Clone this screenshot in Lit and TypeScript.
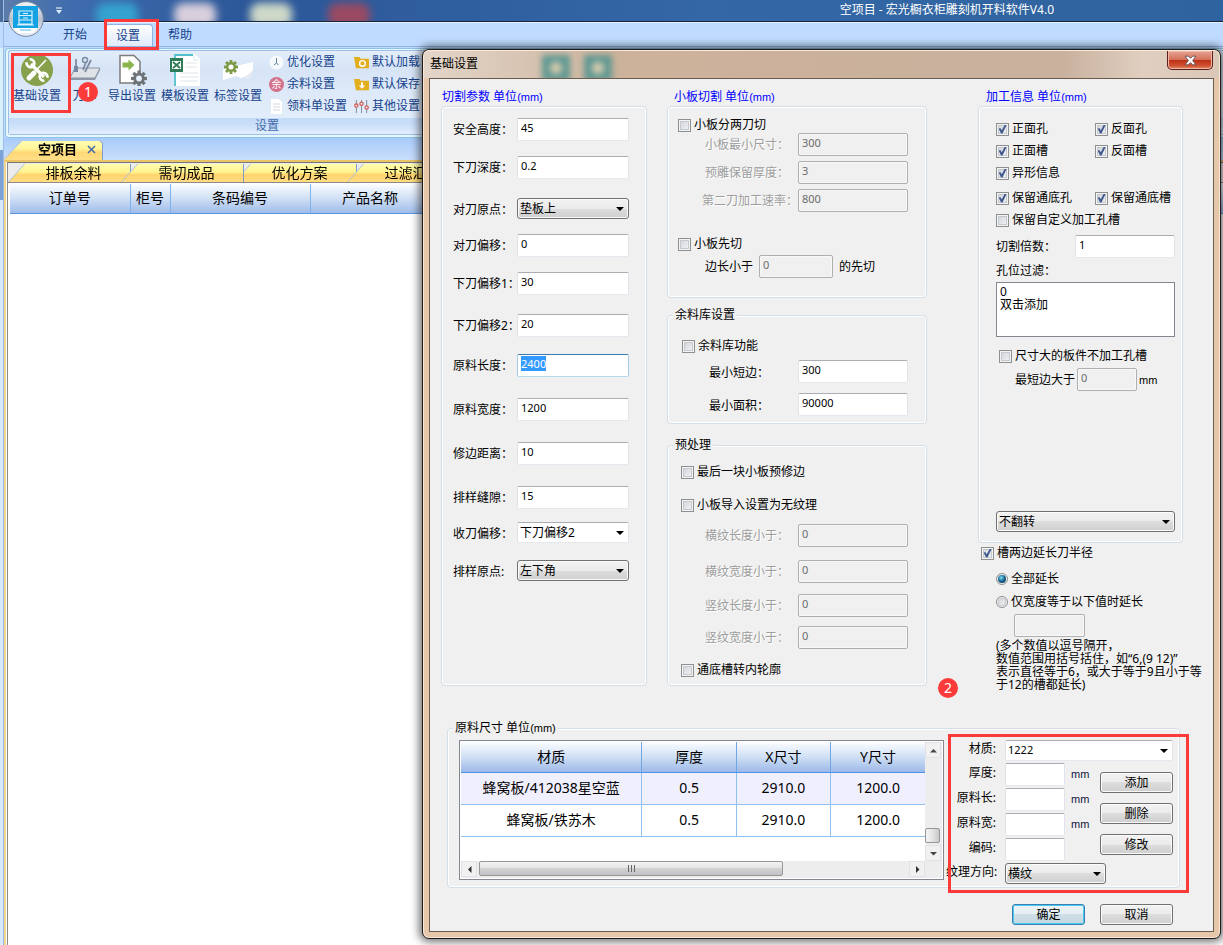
import { LitElement, html, css, svg, nothing } from "lit";
import { customElement, query } from "lit/decorators.js";
import { classMap } from "lit/directives/class-map.js";

type Row = { id: string; label: string; value: string; kind?: "combo" | "list" };

const CUT_ROWS: Row[] = [
  { id: "safe", label: "安全高度：", value: "45" },
  { id: "depth", label: "下刀深度：", value: "0.2" },
  { id: "origin", label: "对刀原点：", value: "垫板上", kind: "list" },
  { id: "offset", label: "对刀偏移：", value: "0" },
  { id: "offset1", label: "下刀偏移1：", value: "30" },
  { id: "offset2", label: "下刀偏移2：", value: "20" },
  { id: "length", label: "原料长度：", value: "2400" },
  { id: "width", label: "原料宽度：", value: "1200" },
  { id: "trim", label: "修边距离：", value: "10" },
  { id: "gap", label: "排样缝隙：", value: "15" },
  { id: "retract", label: "收刀偏移：", value: "下刀偏移2", kind: "combo" },
  { id: "nest", label: "排样原点:", value: "左下角", kind: "list" },
];

const MATERIALS = [
  ["蜂窝板/412038星空蓝", "0.5", "2910.0", "1200.0"],
  ["蜂窝板/铁苏木", "0.5", "2910.0", "1200.0"],
];

const gear = (cx: number, cy: number, r: number, fill: string, hole: string) => svg`
  <g transform="translate(${cx} ${cy})" fill=${fill}>
    <circle r=${r * 0.72}></circle>
    ${[0, 45, 90, 135].map(
      (a) => svg`<rect x=${-r * 0.2} y=${-r} width=${r * 0.4} height=${r * 2} transform="rotate(${a})"></rect>`
    )}
    <circle r=${r * 0.36} fill=${hole}></circle>
  </g>`;

const ICONS = {
  basic: svg`<svg class="big" viewBox="0 0 32 32">
    <circle cx="16" cy="16" r="16" fill="#86a04b"></circle>
    <g stroke="#fff" fill="none">
      <path d="M10 10 23 23" stroke-width="3.200"></path>
      <path d="M5.600 8.200a4.400 4.400 0 0 0 6.200 4.600M8.600 5.200a4.400 4.400 0 0 1 4.400 6.200" stroke-width="2.600"></path>
      <path d="M26.400 23.800a4.400 4.400 0 0 0-6.200-4.600M23.400 26.800a4.400 4.400 0 0 1-4.400-6.200" stroke-width="2.600"></path>
      <path d="M25 6 15 16.500" stroke-width="1.600"></path>
      <path d="M13 19 8 24" stroke-width="5" stroke-linecap="round"></path>
    </g></svg>`,
  tools: svg`<svg class="big" viewBox="0 0 32 32">
    <path d="M6 14h25l-5 10H1z" fill="#dfe3e8" stroke="#8793a5"></path>
    <path d="M1 24h25l5-10v2l-5 10H1z" fill="#8b95a3"></path>
    <path d="M7 5v9M17 8l-3 8M22 6l-6 12" stroke="#7d8ca3" stroke-width="1.800" fill="none"></path>
    <path d="M5 12h4v6H5z" fill="#7488a5"></path>
    <circle cx="16" cy="6" r="2.500" fill="none" stroke="#7d8ca3" stroke-width="1.500"></circle></svg>`,
  exporting: svg`<svg class="big" viewBox="0 0 32 32">
    <path d="M4 1.500h14l6 6V29H4z" fill="#fff" stroke="#7c7c7c" stroke-width="1.500"></path>
    <path d="M6.500 8.500h6V5.500l6 5.500-6 5.500v-3h-6z" fill="#8bb54c"></path>
    ${gear(23, 24.5, 8, "#6f7378", "#e6eefa")}</svg>`,
  template: svg`<svg class="big" viewBox="0 0 32 32">
    <path d="M5 0h21l5 5v27H5z" fill="#fff"></path>
    <path d="M6 32V1h18" fill="none" stroke="#52c0c9" stroke-width="1.800"></path>
    <path d="M25 1v5h5" fill="none" stroke="#d3eff2"></path>
    <path d="M16 9h12M16 13h12M11 19h18M11 23h18M11 27h18" stroke="#dfe5ea"></path>
    <path d="M1 4h13v14H1z" fill="#2f7a57"></path>
    <path d="M3 7h9v8H3z" fill="#fff"></path>
    <path d="M4 8l7 6M11 8l-7 6" stroke="#2f7a57" stroke-width="1.800"></path></svg>`,
  tag: svg`<svg class="big" viewBox="0 0 32 32">
    <path d="M1 15 31 8v8q-5 6-12 8l-5-2-13 4z" fill="#fff"></path>
    <path d="M21 24q6-2 10-8-1 7-5 9z" fill="#e7eaee"></path>
    ${gear(9, 13, 7, "#7d9a45", "#fff")}</svg>`,
  clock: svg`<svg class="small" viewBox="0 0 15 15"><circle cx="7.500" cy="7.500" r="7" fill="#f6f9fc"></circle>
    <path d="M7.500 3v5L5 10M7.500 8l2 2" stroke="#68829e" fill="none"></path></svg>`,
  rest: html`<span class="rest">余</span>`,
  list: svg`<svg class="small" viewBox="0 0 15 15"><path d="M2 0h8l3 3v12H2z" fill="#fff"></path>
    <path d="M4 5h7M4 8h7M4 11h7" stroke="#d2d6dc"></path></svg>`,
  load: svg`<svg class="small" viewBox="0 0 16 14"><path d="M0 1h6l1 2h9v10H2z" fill="#e2ae1b"></path>
    <circle cx="9" cy="8" r="3" fill="none" stroke="#fff" stroke-width="1.500"></circle></svg>`,
  save: svg`<svg class="small" viewBox="0 0 16 14"><path d="M0 1h6l1 2h9v10H2z" fill="#e2ae1b"></path>
    <path d="M7.500 4.500h2V8H12l-3.500 3.500L5 8h2.500z" fill="#fff"></path></svg>`,
  other: svg`<svg class="small" viewBox="0 0 16 14"><path d="M2.500 0v14M8 0v14M13.500 0v14" stroke="#7d8794"></path>
    <g fill="#fff" stroke="#d25a55" stroke-width="1.400"><circle cx="2.500" cy="6" r="1.700"></circle>
    <circle cx="8" cy="4" r="1.700"></circle><circle cx="13.500" cy="8" r="1.700"></circle></g></svg>`,
};

const base = css`
  * { box-sizing: border-box; }
  h1, h2, p { margin: 0; font-weight: normal; font-size: inherit; }
  button, input, select, textarea { font: inherit; color: inherit; margin: 0; border-radius: 0; }
  .mark { position: absolute; border: 3px solid #fb3a3a; pointer-events: none; z-index: 3; }
  .dot {
    position: absolute; z-index: 4; width: 20px; height: 20px; border-radius: 50%;
    background: #fb3a3a; color: #fff; font-size: 14px; line-height: 20px; text-align: center;
  }
`;

const mm = (text: string) => html`<span class="mm">${text}</span>`;

@customElement("settings-dialog")
export class SettingsDialog extends LitElement {
  static styles = [
    base,
    css`
      :host {
        display: flex; flex-direction: column; color: #000; background: #e6c7aa;
        border: 1px solid #1f1a17; border-radius: 7px; padding: 0 6px 6px;
        box-shadow: inset 0 0 0 1px #f7e8da, 0 0 8px 3px rgba(0, 0, 0, 0.55);
        font: 12px/16px "Noto Sans", "Noto Sans CJK SC", sans-serif;
      }
      .caption {
        position: relative; display: flex; align-items: flex-start; justify-content: space-between;
        height: 28px; margin: 0 -5px; padding: 0 6px; overflow: hidden; border-radius: 6px 6px 0 0;
        border-top: 1px solid #f6ebe1;
        background: linear-gradient(90deg, #e3d5c8 0, #d9c6b5 90px, #cdb29b 190px, #c9b19e 640px, #e0cfc0 720px, #d9c8b8);
      }
      .caption h1 { position: relative; line-height: 26px; }
      .ghost { position: absolute; top: 4px; width: 28px; height: 26px; background: #5d9791; filter: blur(3px); }
      .ghost.a { left: 118px; }
      .ghost.b { left: 160px; }
      .ghost::after { content: ""; position: absolute; inset: 7px 8px; background: #d6cbae; border-radius: 5px; }
      .close {
        position: relative; width: 46px; height: 19px; padding: 0; border: 1px solid #5b2019; border-top: 0;
        border-radius: 0 0 5px 5px; box-shadow: inset 0 0 0 1px #f0b7a8;
        background: linear-gradient(#e6a593, #d4705a 48%, #bb2f14 50%, #cf4f2f 80%, #e28a62);
      }
      .close svg { display: block; margin: auto; width: 13px; height: 11px; }
      .client { border: 1px solid #6b5c50; background: #f0f0f0; padding-top: 9px; }
      .mm { font-family: "Liberation Sans", sans-serif; font-size: 11px; }

      .columns { position: relative; display: grid; grid-template-columns: 206fr 260fr 256fr; gap: 20px; margin: 0 10px 0 11px; }
      .col { display: flex; flex-direction: column; min-width: 0; }
      .col.left { padding-bottom: 5px; }
      .col.right { position: relative; padding-left: 31px; }
      .title { color: #00f; line-height: 18px; padding-left: 1px; }
      .col.mid .title { padding-left: 7px; }
      .col.right .title { padding-left: 8px; }

      fieldset { min-width: 0; margin: 0; padding: 0; border: 1px solid #d3dee7; border-radius: 4px; box-shadow: inset 0 0 0 1px #fff; }
      legend { margin-left: 5px; padding: 0 2px; line-height: 16px; background: #f0f0f0; }

      input.text, .combo select, textarea {
        width: 100%; min-width: 0; height: 23px; padding: 0 3px 4px; background: #fff; outline: 0;
        border: 1px solid #e2e3ea; border-top-color: #abadb3; border-bottom-color: #e3e9ef; border-radius: 2px;
      }
      input.text { font-size: 11px; }
      input.text:disabled { background: #f0f0f0; color: #6d6d6d; border-color: #afafaf; box-shadow: inset 0 0 0 1px #f8f8f8; }
      input.text:focus { border-color: #a4c9e3; border-top-color: #3d7bad; border-bottom-color: #b7d9ed; }
      input::selection { background: #39f; color: #fff; }

      .combo { position: relative; display: block; min-width: 0; }
      .combo select { appearance: none; display: block; height: 21px; padding: 0 18px 0 2px; }
      .combo::after {
        content: ""; position: absolute; right: 5px; top: 9px;
        border: 4px solid transparent; border-top-color: #000; border-bottom: 0; pointer-events: none;
      }
      .combo.list select, .btn {
        border: 1px solid #707070; border-radius: 3px; box-shadow: inset 0 0 0 1px #fbfbfb;
        background: linear-gradient(#f2f2f2, #ebebeb 50%, #ddd 50%, #cfcfcf);
      }
      .btn { width: 73px; height: 21px; padding: 0; line-height: 16px; }
      .btn.default { border-color: #3c7fb1; box-shadow: inset 0 0 0 1px #46c9f2; background: linear-gradient(#eef4f7, #e3eef4 50%, #cfdfe8 50%, #c5d7e2); }

      label { white-space: nowrap; }
      .check { display: flex; align-items: center; gap: 3px; height: 16px; }
      .check input { appearance: none; position: relative; flex: none; width: 13px; height: 13px; border: 1px solid #8e8f8f; background: linear-gradient(135deg, #cdd1d8, #f6f6f6); box-shadow: inset 0 0 0 1px #f4f4f4, inset 0 0 0 2px #c4c9d0; }
      .check input:checked::after { content: ""; position: absolute; inset: 1px; background: #42598f; clip-path: polygon(8% 48%, 26% 40%, 42% 64%, 76% 0, 98% 0, 50% 100%, 34% 100%); }
      .check input[type="radio"] { border-radius: 50%; width: 12px; height: 12px; }
      .check input[type="radio"]:checked::after { inset: 1px; border-radius: 50%; clip-path: none; background: radial-gradient(circle at 40% 35%, #7fe0f5, #14608d 50%, #0c3350); }

      .cut { flex: 1; display: grid; align-content: start; align-items: start; padding: 11px 17px 0 10px;
        grid-template-columns: 65px minmax(0, 1fr);
        grid-template-rows: 38px 42px 36px 38px 42px 40px 44px 44px 44px 36px 38px 24px; }
      .cut label { line-height: 24px; padding-left: 1px; }

      .pairs { display: grid; grid-template-columns: 96px minmax(0, 1fr); row-gap: 5px; padding: 0 18px 0 34px; }
      .pairs label { line-height: 23px; padding-left: 3px; }
      .pairs label.long { padding-left: 0; }
      .off label { color: #9d9d9d; text-shadow: 1px 1px 0 #fff; }
      .small { padding: 10px 0 19px; }
      .small .check { margin-left: 10px; }
      .small .pairs + .check { margin-top: 24px; }
      .inline { display: flex; align-items: center; gap: 6px; margin: 3px 0 0 37px; }
      .inline input { flex: 0 0 74px; }
      .stock { margin-top: 9px; }
      .stock .check { margin: 15px 0 6px 14px; }
      .stock .pairs { row-gap: 10px; padding-bottom: 7px; }
      .stock .pairs label { padding-left: 7px; line-height: 26px; height: 23px; }
      .pre { margin-top: 13px; padding-bottom: 7px; }
      .pre .check { margin: 11px 0 0 13px; }
      .pre .check + .check { margin-top: 17px; }
      .pre .pairs { grid-template-rows: 36px 34px 32px 23px; row-gap: 0; align-items: start; margin-top: 11px; }
      .pre .pairs + .check { margin-top: 13px; }

      .info { margin-right: 20px; padding: 14px 7px 10px 17px; }
      .grid2 { display: grid; grid-template-columns: 99px 1fr; row-gap: 6px; }
      .grid2 .wide { grid-column: 1 / -1; }
      .grid2 .later { margin-top: 3px; }
      .times { display: grid; grid-template-columns: 79px minmax(0, 1fr); align-items: center; margin-top: 7px; }
      .filter { display: block; height: 24px; line-height: 26px; }
      textarea { display: block; height: 55px; padding: 2px 3px; border-color: #828790; border-radius: 0; line-height: 13px; resize: none; overflow: hidden; }
      .info .large { margin: 11px 0 0 3px; }
      .info .inline { gap: 2px; margin: 4px 0 0 19px; }
      .info .inline input { flex-basis: 60px; }
      .info .combo { margin-top: 120px; }
      .extend { margin: 2px 0 0 3px; }
      .radio { margin: 10px 0 0 18px; }
      .radio + .radio { margin-top: 7px; }
      input.short { width: 71px; margin: 4px 0 2px 36px; }
      .note { line-height: 13px; margin-left: 18px; white-space: nowrap; }
      .col.right .dot { left: -9px; bottom: -7px; }

      .raw { margin: 29px 33px 0 17px; }
      .rawbody { display: flex; gap: 2px; padding: 4px 6px 3px 11px; }
      .frame { flex: 1; min-width: 0; display: grid; grid-template-columns: minmax(0, 1fr) 17px; grid-template-rows: 1fr 17px; height: 140px; padding: 1px; border: 1px solid #828790; background: #fff; }
      table { width: 100%; align-self: start; border-collapse: collapse; table-layout: fixed; font-size: 14px; line-height: 20px; text-align: center; }
      .wide-col { width: 39%; }
      th { height: 30px; padding: 0; font-weight: normal; border-right: 1px solid #6ea6e6; border-bottom: 1px solid #4b92ea; background: linear-gradient(#fbfdff, #cfdff5 50%, #9db9e8); }
      td { height: 32px; padding: 0; border-right: 1px solid #90c0f0; border-bottom: 1px solid #90c0f0; }
      tbody tr:first-child td { background: #f0effe; }
      th:last-child, td:last-child { border-right: 0; }
      .vbar { display: flex; flex-direction: column; justify-content: space-between; background: #ededed; }
      .hbar { display: flex; background: #ededed; }
      .corner { background: #ededed; }
      .arrow { width: 16px; height: 16px; display: grid; place-items: center; background: #f1f1f1; border: 1px solid #e2e2e2; padding: 0; }
      .arrow svg { width: 7px; height: 7px; }
      .vthumb { width: 15px; height: 15px; margin-bottom: 2px; border: 1px solid #979797; border-radius: 2px; background: linear-gradient(90deg, #f4f4f4, #e4e4e4 50%, #c8c8c8); }
      .hthumb { width: 304px; height: 15px; margin-left: 2px; display: flex; justify-content: center; align-items: center; gap: 2px; border: 1px solid #979797; border-radius: 2px; background: linear-gradient(#f4f4f4, #e4e4e4 45%, #d2d2d4 50%, #c2c2c5); }
      .hthumb i { width: 1px; height: 7px; background: #666; }
      .hbar .arrow:last-child { margin-left: auto; }
      .form { position: relative; display: grid; grid-template-columns: 59px 60px 35px 73px; gap: 2px 0; align-items: center; align-content: start; }
      .form label { grid-column: 1; text-align: right; padding-right: 9px; line-height: 16px; padding-bottom: 4px; }
      .form .unit { grid-column: 3; padding: 0 0 2px 6px; color: #14143c; }
      .form input { grid-column: 2; }
      .form .name { grid-column: 2 / -1; }
      .form .name select { padding-bottom: 2px; font-size: 11px; }
      .form .grain { grid-column: 2 / -1; width: 101px; }
      .actions { grid-column: 4; grid-row: 2 / 6; display: flex; flex-direction: column; gap: 10px; align-self: start; padding-top: 9px; }
      .form .mark { inset: -6px -16px -9px 2px; }
      .footer { display: flex; justify-content: flex-end; gap: 15px; padding: 16px 40px 6px; }
    `,
  ];

  @query("#length") lengthBox!: HTMLInputElement;

  firstUpdated() {
    this.lengthBox.focus();
    this.lengthBox.select();
  }

  private combo(id: string, value: string, list: boolean, cls = "") {
    return html`<span class="combo ${list ? "list" : ""} ${cls}"
      ><select id=${id}><option>${value}</option></select></span>`;
  }

  private check(label: string, checked = false, cls = "") {
    return html`<label class="check ${cls}"><input type="checkbox" ?checked=${checked} />${label}</label>`;
  }

  private pair(id: string, label: string, value: string, disabled = false, cls = "") {
    return html`<label class=${cls || nothing} for=${id}>${label}</label
      ><input class="text" id=${id} .value=${value} ?disabled=${disabled} />`;
  }

  render() {
    return html`
      <header class="caption">
        <span class="ghost a"></span><span class="ghost b"></span>
        <h1>基础设置</h1>
        <button class="close" aria-label="关闭">
          <svg viewBox="0 0 12 10"><path d="M1 1h3l2 2 2-2h3L8 5l3 4H8L6 7 4 9H1l3-4z" fill="#fff" stroke="#5b4a52" stroke-width="0.800"></path></svg>
        </button>
      </header>
      <main class="client">
        <div class="columns">
          <section class="col left">
            <h2 class="title">切割参数 单位${mm("(mm)")}</h2>
            <fieldset class="cut">
              ${CUT_ROWS.map(
                (r) => html`<label for=${r.id}>${r.label}</label>${r.kind
                    ? this.combo(r.id, r.value, r.kind === "list")
                    : html`<input class="text" id=${r.id} .value=${r.value} />`}`
              )}
            </fieldset>
          </section>

          <section class="col mid">
            <h2 class="title">小板切割 单位${mm("(mm)")}</h2>
            <fieldset class="small">
              ${this.check("小板分两刀切")}
              <div class="pairs off">
                ${this.pair("min", "小板最小尺寸：", "300", true)}
                ${this.pair("keep", "预雕保留厚度：", "3", true)}
                ${this.pair("rate", "第二刀加工速率：", "800", true, "long")}
              </div>
              ${this.check("小板先切")}
              <div class="inline">
                <label for="edge">边长小于</label><input class="text" id="edge" .value=${"0"} disabled /><span>的先切</span>
              </div>
            </fieldset>
            <fieldset class="stock">
              <legend>余料库设置</legend>
              ${this.check("余料库功能")}
              <div class="pairs">
                ${this.pair("shortest", "最小短边：", "300")} ${this.pair("area", "最小面积：", "90000")}
              </div>
            </fieldset>
            <fieldset class="pre">
              <legend>预处理</legend>
              ${this.check("最后一块小板预修边")} ${this.check("小板导入设置为无纹理")}
              <div class="pairs off">
                ${this.pair("hl", "横纹长度小于：", "0", true)} ${this.pair("hw", "横纹宽度小于：", "0", true)}
                ${this.pair("vl", "竖纹长度小于：", "0", true)} ${this.pair("vw", "竖纹宽度小于：", "0", true)}
              </div>
              ${this.check("通底槽转内轮廓")}
            </fieldset>
          </section>

          <section class="col right">
            <h2 class="title">加工信息 单位${mm("(mm)")}</h2>
            <fieldset class="info">
              <div class="grid2">
                ${this.check("正面孔", true)} ${this.check("反面孔", true)} ${this.check("正面槽", true)}
                ${this.check("反面槽", true)} ${this.check("异形信息", true, "wide")}
                ${this.check("保留通底孔", true, "later")} ${this.check("保留通底槽", true, "later")}
                ${this.check("保留自定义加工孔槽", false, "wide")}
              </div>
              <div class="times">${this.pair("times", "切割倍数：", "1")}</div>
              <label class="filter" for="holes">孔位过滤：</label>
              <textarea id="holes" .value=${"0\n双击添加"}></textarea>
              ${this.check("尺寸大的板件不加工孔槽", false, "large")}
              <div class="inline">
                <label for="large">最短边大于</label><input class="text" id="large" .value=${"0"} disabled />${mm("mm")}
              </div>
              <span class="combo list"><select aria-label="翻转"><option>不翻转</option></select></span>
            </fieldset>
            ${this.check("槽两边延长刀半径", true, "extend")}
            <label class="check radio"><input type="radio" name="ext" checked />全部延长</label>
            <label class="check radio"><input type="radio" name="ext" />仅宽度等于以下值时延长</label>
            <input class="text short" aria-label="宽度值" disabled />
            <p class="note">(多个数值以逗号隔开，<br />数值范围用括号括住，如“6,(9 12)”<br />表示直径等于6，或大于等于9且小于等<br />于12的槽都延长)</p>
            <span class="dot">2</span>
          </section>
        </div>

        <fieldset class="raw">
          <legend>原料尺寸 单位${mm("(mm)")}</legend>
          <div class="rawbody">
            <div class="frame">
              <table>
                <colgroup><col class="wide-col" /><col /><col /><col /></colgroup>
                <thead><tr><th>材质</th><th>厚度</th><th>X尺寸</th><th>Y尺寸</th></tr></thead>
                <tbody>${MATERIALS.map((m) => html`<tr>${m.map((c) => html`<td>${c}</td>`)}</tr>`)}</tbody>
              </table>
              <div class="vbar">
                <button class="arrow" aria-label="上"><svg viewBox="0 0 7 7"><path d="M0 5.500 3.500 2 7 5.500z" fill="#444"></path></svg></button>
                <div><div class="vthumb"></div>
                <button class="arrow" aria-label="下"><svg viewBox="0 0 7 7"><path d="M0 2l3.500 3.500L7 2z" fill="#444"></path></svg></button></div>
              </div>
              <div class="hbar">
                <button class="arrow" aria-label="左"><svg viewBox="0 0 7 7"><path d="M5.500 0 2 3.500 5.500 7z" fill="#333"></path></svg></button>
                <div class="hthumb"><i></i><i></i><i></i></div>
                <button class="arrow" aria-label="右"><svg viewBox="0 0 7 7"><path d="M2 0l3.500 3.500L2 7z" fill="#333"></path></svg></button>
              </div>
              <div class="corner"></div>
            </div>
            <div class="form">
              <label for="mat">材质:</label>${this.combo("mat", "1222", false, "name")}
              ${this.pair("thick", "厚度:", "")}<span class="unit mm">mm</span>
              ${this.pair("rawl", "原料长:", "")}<span class="unit mm">mm</span>
              ${this.pair("raww", "原料宽:", "")}<span class="unit mm">mm</span>
              ${this.pair("code", "编码:", "")}
              <label for="grain">纹理方向:</label>${this.combo("grain", "横纹", true, "grain")}
              <div class="actions">
                <button class="btn">添加</button><button class="btn">删除</button><button class="btn">修改</button>
              </div>
              <span class="mark"></span>
            </div>
          </div>
        </fieldset>
        <div class="footer"><button class="btn default">确定</button><button class="btn">取消</button></div>
      </main>
    `;
  }
}

@customElement("app-root")
export class AppRoot extends LitElement {
  static styles = [
    base,
    css`
      :host { display: block; font: 12px/16px "Noto Sans", "Noto Sans CJK SC", sans-serif; color: #15428b; }
      .desk { position: relative; display: flex; min-height: 100vh; overflow: hidden; padding-left: 3px; background: linear-gradient(#4d6f9c 0 22px, #bfdbff 22px 48px, #d8f0fa 48px 150px, #7da2d8 150px 200px, #d9e8fa 200px); }
      .app { flex: 1; min-width: 0; display: flex; flex-direction: column; background: #bfdbff; border-left: 1px solid #9dbde8; }
      .bar { position: relative; height: 22px; overflow: hidden; border-bottom: 1px solid #16243c; background: linear-gradient(90deg, #5b7ba9, #3e6cae 70px, #2c5799 240px, #3467a6 700px, #2e639f); color: #fff; }
      .bar h1 { position: relative; padding-right: 169px; line-height: 19px; text-align: right; }
      .blob { position: absolute; filter: blur(4px); top: 3px; width: 42px; height: 24px; border-radius: 9px; }
      .orb { position: absolute; left: 8px; top: 1px; z-index: 2; width: 36px; height: 36px; }
      .qat { position: absolute; left: 52px; top: 7px; width: 6px; height: 7px; }
      .tabs { display: flex; align-items: flex-end; height: 25px; padding-left: 49px; border-top: 1px solid #e6f1ff; border-bottom: 1px solid #8db2e3; }
      .tabs button { position: relative; height: 22px; padding: 0 10px; border: 0; background: none; line-height: 22px; }
      .tabs .on { width: 48px; margin: 0 5px 0 8px; padding: 0 2px 0 0; border: 1px solid #8db2e3; border-bottom: 0; border-radius: 4px 4px 0 0; background: linear-gradient(#fff, #dfeafa); line-height: 20px; }
      .tabs .mark { inset: -6px -7px -4px -2px; }
      .ribbon { margin: 1px 0 0 1px; border: 1px solid #8fc3e4; border-right: 0; border-radius: 4px 0 0 4px; padding: 1px 0 2px 2px; background: #e5f6fd; }
      .group { border: 1px solid #9fbfe8; border-right: 0; border-radius: 3px 0 0 3px; background: linear-gradient(#e3edfb, #d6e4f6 18px, #dde9f8 40px, #e6f0fd); }
      .items { display: flex; height: 67px; padding: 3px 0 0 4px; gap: 5px; }
      .item { position: relative; flex: none; display: flex; flex-direction: column; align-items: center; gap: 2px; width: 48px; padding: 0; border: 0; background: none; line-height: 16px; white-space: nowrap; }
      .item.narrow { width: 37px; }
      .item .mark { inset: -1px -10px 5px -2px; }
      .item .dot { left: 12px; top: 28px; }
      .big { display: block; width: 32px; height: 32px; }
      .stack { display: flex; flex-direction: column; margin-left: 2px; gap: 6px; }
      .stack button { display: flex; align-items: center; gap: 3px; height: 16px; padding: 0; border: 0; background: none; white-space: nowrap; }
      .small { width: 15px; height: 15px; flex: none; }
      .rest { width: 15px; height: 15px; border-radius: 50%; background: #d4708b; color: #fff; font-size: 10px; line-height: 14px; text-align: center; }
      .cap { height: 16px; padding-left: 246px; background: linear-gradient(#c4dbf8, #c9dffa 40%, #e2eefd); color: #3e6aaa; line-height: 15px; }
      .docs { display: flex; align-items: flex-end; height: 22px; background: linear-gradient(#a9cbf9, #c9dffd); }
      .shape { filter: drop-shadow(1px 0 0 #7f9cc8) drop-shadow(-1px 0 0 #aebfd8); }
      .doc { display: flex; align-items: center; gap: 10px; width: 98px; height: 19px; padding: 0 3px 3px 34px; border: 0; background: linear-gradient(#fffbb0, #fff59a 40%, #ffd775 60%, #ffdf87); clip-path: polygon(0 100%, 18px 0, 97% 0, 100% 2px, 100% 100%); color: #000; font-size: 13px; font-weight: bold; white-space: nowrap; }
      .doc svg { width: 9px; height: 9px; flex: none; }
      .page { flex: 1; display: flex; flex-direction: column; border-top: 2px solid #e9c365; border-left: 2px solid #f0d58c; padding-left: 1px; background: #fff; }
      .sheet { flex: 1; border-top: 1px solid #777; border-left: 1px solid #8a8a8a; color: #000; }
      .views { display: flex; height: 20px; padding: 1px 0 0 1px; background: #ececec; border-bottom: 1px solid #8a8a8a; }
      .view { flex: none; width: 121px; height: 18px; margin-left: -8px; padding: 0 0 0 8px; border: 0; font-size: 14px; line-height: 16px; background: linear-gradient(#fffcae, #fff38f 45%, #ffd36e 60%, #ffdd82); clip-path: polygon(0 100%, 16px 0, 100% 0, 100% 100%); color: #000; }
      .views .shape:first-child { margin-left: 8px; }
      .views .shape:nth-child(2) { z-index: 1; }
      table { width: 100%; margin: 1px 0 0 2px; border-collapse: collapse; table-layout: fixed; font-size: 14px; }
      th { height: 29px; padding: 0; font-weight: normal; border-right: 1px solid #7db4ee; border-bottom: 1px solid #5b96e0; background: linear-gradient(#fbfdff, #cfdff5 50%, #9fbcea); }
      .c1 { width: 120px; } .c2 { width: 40px; } .c3 { width: 140px; } .c4 { width: 120px; }
      settings-dialog { position: absolute; left: 422px; right: 2px; top: 49px; z-index: 5; }
    `,
  ];

  render() {
    const big = [
      ["基础设置", ICONS.basic],
      ["刀库", ICONS.tools],
      ["导出设置", ICONS.exporting],
      ["模板设置", ICONS.template],
      ["标签设置", ICONS.tag],
    ] as const;
    const stacks = [
      [["优化设置", ICONS.clock], ["余料设置", ICONS.rest], ["领料单设置", ICONS.list]],
      [["默认加载", ICONS.load], ["默认保存", ICONS.save], ["其他设置", ICONS.other]],
    ];
    const blobs = [
      [92, "#35a3d0"], [170, "#d9cfdc"], [246, "#cfd9c8"], [324, "#9a4a62"],
    ] as const;
    return html`
      <div class="desk">
        <div class="app">
          <header class="bar">
            ${blobs.map(([x, c]) => html`<span class="blob" style="left:${x}px;background:${c}"></span>`)}
            <svg class="qat" viewBox="0 0 6 7"><path d="M0 1h6" stroke="#fff"></path><path d="M0 3h6L3 7z" fill="#dbe8fa"></path></svg>
            <h1>空项目 - 宏光橱衣柜雕刻机开料软件V4.0</h1>
          </header>
          <svg class="orb" viewBox="0 0 36 36">
            <defs><linearGradient id="g" x1="0" y1="0" x2="0" y2="1"><stop offset="0" stop-color="#f4f6f9"></stop><stop offset="0.500" stop-color="#b9c2cf"></stop><stop offset="1" stop-color="#f2f5fa"></stop></linearGradient></defs>
            <circle cx="18" cy="18" r="17.300" fill="url(#g)" stroke="#75869e"></circle>
            <path d="M5 5h25v22H5z" fill="#13a2e3"></path>
            <path d="M5 27h25l-5 5H10z" fill="#fff"></path><path d="M12 29h11" stroke="#53b9e8"></path>
            <path d="M11 10h13v13H11zM11 14.500h13M11 19h13M9 24h17M15 12.500h5M15 17h5" fill="none" stroke="#d9f2fd" stroke-width="1.200"></path>
          </svg>
          <nav class="tabs">
            <button>开始</button><button class="on">设置<span class="mark"></span></button><button>帮助</button>
          </nav>
          <section class="ribbon">
            <div class="group">
              <div class="items">
                ${big.map(
                  ([t, icon], i) => html`<button class=${classMap({ item: true, narrow: i === 1 })}>
                    ${icon}<span>${t}</span>${i === 0 ? html`<span class="mark"></span>` : nothing}${i === 1
                      ? html`<span class="dot">1</span>` : nothing}
                  </button>`
                )}
                ${stacks.map(
                  (s) => html`<div class="stack">${s.map(([t, icon]) => html`<button>${icon}<span>${t}</span></button>`)}</div>`
                )}
              </div>
              <div class="cap">设置</div>
            </div>
          </section>
          <div class="docs">
            <div class="shape"><button class="doc">空项目<svg viewBox="0 0 9 9"><path d="M1 1l7 7M8 1 1 8" stroke="#3f69a8" stroke-width="1.500"></path></svg></button></div>
          </div>
          <div class="page">
            <div class="sheet">
              <nav class="views">
                ${["排板余料", "需切成品", "优化方案", "过滤汇总"].map(
                  (t) => html`<div class="shape"><button class="view">${t}</button></div>`
                )}
              </nav>
              <table>
                <colgroup><col class="c1" /><col class="c2" /><col class="c3" /><col class="c4" /><col /></colgroup>
                <thead><tr><th>订单号</th><th>柜号</th><th>条码编号</th><th>产品名称</th><th></th></tr></thead>
              </table>
            </div>
          </div>
        </div>
        <settings-dialog></settings-dialog>
      </div>
    `;
  }
}
